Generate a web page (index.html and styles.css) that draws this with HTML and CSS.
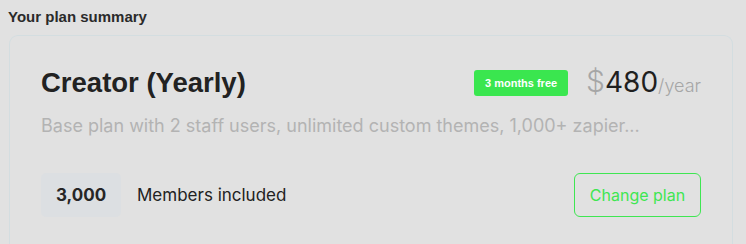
FILE: index.html
```html
<!DOCTYPE html>
<html>
<head>
<meta charset="utf-8">
<link rel="stylesheet" href="styles.css">
</head>
<body>
<h2 class="section-title">Your plan summary</h2>
<div class="card">
  <div class="plan-head">
    <h1 class="plan-name">Creator (Yearly)</h1>
    <div class="plan-price-group">
      <span class="badge">3 months free</span>
      <div class="price"><span class="currency">$</span><span class="amount">480</span><span class="period">/year</span></div>
    </div>
  </div>
  <p class="plan-desc">Base plan with 2 staff users, unlimited custom themes, 1,000+ zapier...</p>
  <div class="plan-foot">
    <div class="members">
      <span class="members-count">3,000</span>
      <span class="members-label">Members included</span>
    </div>
    <button class="btn-change">Change plan</button>
  </div>
</div>
</body>
</html>
```
FILE: styles.css
```css
html, body {
  background: #e1e1e1;
}
body {
  margin: 0;
  padding: 0 8px;
  font-family: Inter, "Liberation Sans", sans-serif;
  color: #222;
  height: 244px;
  overflow: hidden;
}
.section-title {
  font-family: "Liberation Sans", Arial, sans-serif;
  font-size: 15px;
  font-weight: 700;
  color: #2a2a2a;
  margin: 0;
  padding-top: 8px;
  line-height: 18px;
  height: 27px;
}
.card {
  margin-left: 1px;
  width: 724px;
  border: 1px solid #d3dde0;
  border-bottom: none;
  border-radius: 9px 9px 0 0;
  padding: 29px 31px 0 31px;
  box-sizing: border-box;
  height: 209px;
}
.plan-head {
  display: flex;
  justify-content: space-between;
  align-items: center;
  height: 36px;
}
.plan-name {
  margin: 0;
  font-family: "Liberation Sans", Arial, sans-serif;
  font-size: 27.5px;
  font-weight: 700;
  color: #222;
  line-height: 36px;
}
.plan-price-group {
  display: flex;
  align-items: center;
  gap: 18px;
}
.badge {
  background: #3ae64f;
  color: #fff;
  font-family: "Liberation Sans", Arial, sans-serif;
  font-weight: 700;
  font-size: 11px;
  border-radius: 3px;
  width: 94px;
  height: 26px;
  display: flex;
  align-items: center;
  justify-content: center;
}
.price {
  display: flex;
  align-items: baseline;
  line-height: 36px;
}
.currency {
  font-size: 30px;
  color: #a6a6a6;
  font-weight: 300;
}
.amount {
  font-size: 28px;
  color: #1f1f1f;
  font-weight: 400;
}
.period {
  font-size: 18px;
  color: #a6a6a6;
  font-weight: 300;
}
.plan-desc {
  margin: 12px 0 0 0;
  font-size: 18px;
  line-height: 26px;
  color: #b3b3b3;
  font-weight: 400;
}
.plan-foot {
  margin-top: 34px;
  display: flex;
  justify-content: space-between;
  align-items: center;
}
.members {
  display: flex;
  align-items: center;
  gap: 16px;
}
.members-count {
  background: #dcdfe2;
  border-radius: 5px;
  width: 80px;
  height: 44px;
  display: flex;
  align-items: center;
  justify-content: center;
  font-weight: 700;
  font-size: 17px;
  color: #262626;
}
.members-label {
  font-size: 17px;
  color: #222;
}
.btn-change {
  width: 127px;
  height: 44px;
  border: 1px solid #3ee652;
  border-radius: 6px;
  background: transparent;
  color: #3ee652;
  font-family: Inter, "Liberation Sans", sans-serif;
  font-size: 16px;
  padding: 0;
}
```
